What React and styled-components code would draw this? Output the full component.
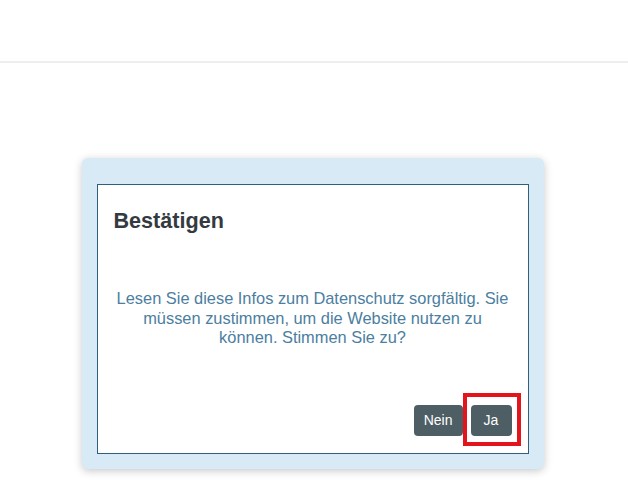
import React from 'react';
import styled, { createGlobalStyle } from 'styled-components';

const GlobalStyle = createGlobalStyle`
    html, body {
        margin: 0;
        padding: 0;
        background: #ffffff;
        font-family: "Liberation Sans", Arial, sans-serif;
    }
`;

const Page = styled.div`
    display: flex;
    flex-direction: column;
    min-height: 504px;
`;

const Header = styled.header`
    height: 61px;
    border-bottom: 2px solid #eeeeee;
`;

const Main = styled.main`
    display: flex;
    justify-content: center;
    padding-top: 95px;
    padding-right: 3px;
`;

const Card = styled.div`
    width: 462px;
    box-sizing: border-box;
    padding: 26px 15px 15px 15px;
    background: #d7eaf5;
    border-radius: 6px;
    box-shadow: 0 2px 8px rgba(0, 0, 0, 0.22);
`;

const Panel = styled.div`
    display: flex;
    flex-direction: column;
    background: #ffffff;
    border: 1px solid #2f5f7e;
    padding: 0 16px 17px 16px;
`;

const Title = styled.h2`
    margin: 24px 0 0 0;
    font-size: 21.6px;
    line-height: 24px;
    font-weight: 700;
    color: #343a40;
`;

const Message = styled.p`
    margin: 56px 0 0 0;
    text-align: center;
    font-size: 16.4px;
    line-height: 19.5px;
    color: #4b7ea0;
`;

const Actions = styled.div`
    display: flex;
    justify-content: flex-end;
    gap: 8px;
    margin-top: 57px;
`;

const Button = styled.button`
    position: relative;
    height: 31px;
    min-width: 41px;
    padding: 0 10px;
    border: none;
    border-radius: 4px;
    background: #4e5e65;
    color: #ffffff;
    font-family: "Liberation Sans", Arial, sans-serif;
    font-size: 14px;
    cursor: pointer;
`;

const Highlight = styled.span`
    position: absolute;
    top: -12px;
    bottom: -10px;
    left: -8px;
    right: -9px;
    border: 4px solid #e3141c;
    pointer-events: none;
`;

const App = () => {
    return (
        <Page>
            <GlobalStyle />
            <Header />
            <Main>
                <Card>
                    <Panel>
                        <Title>Bestätigen</Title>
                        <Message>
                            Lesen Sie diese Infos zum Datenschutz sorgfältig. Sie müssen zustimmen, um die Website nutzen zu können. Stimmen Sie zu?
                        </Message>
                        <Actions>
                            <Button>Nein</Button>
                            <Button>
                                Ja
                                <Highlight />
                            </Button>
                        </Actions>
                    </Panel>
                </Card>
            </Main>
        </Page>
    );
};

export default App;
